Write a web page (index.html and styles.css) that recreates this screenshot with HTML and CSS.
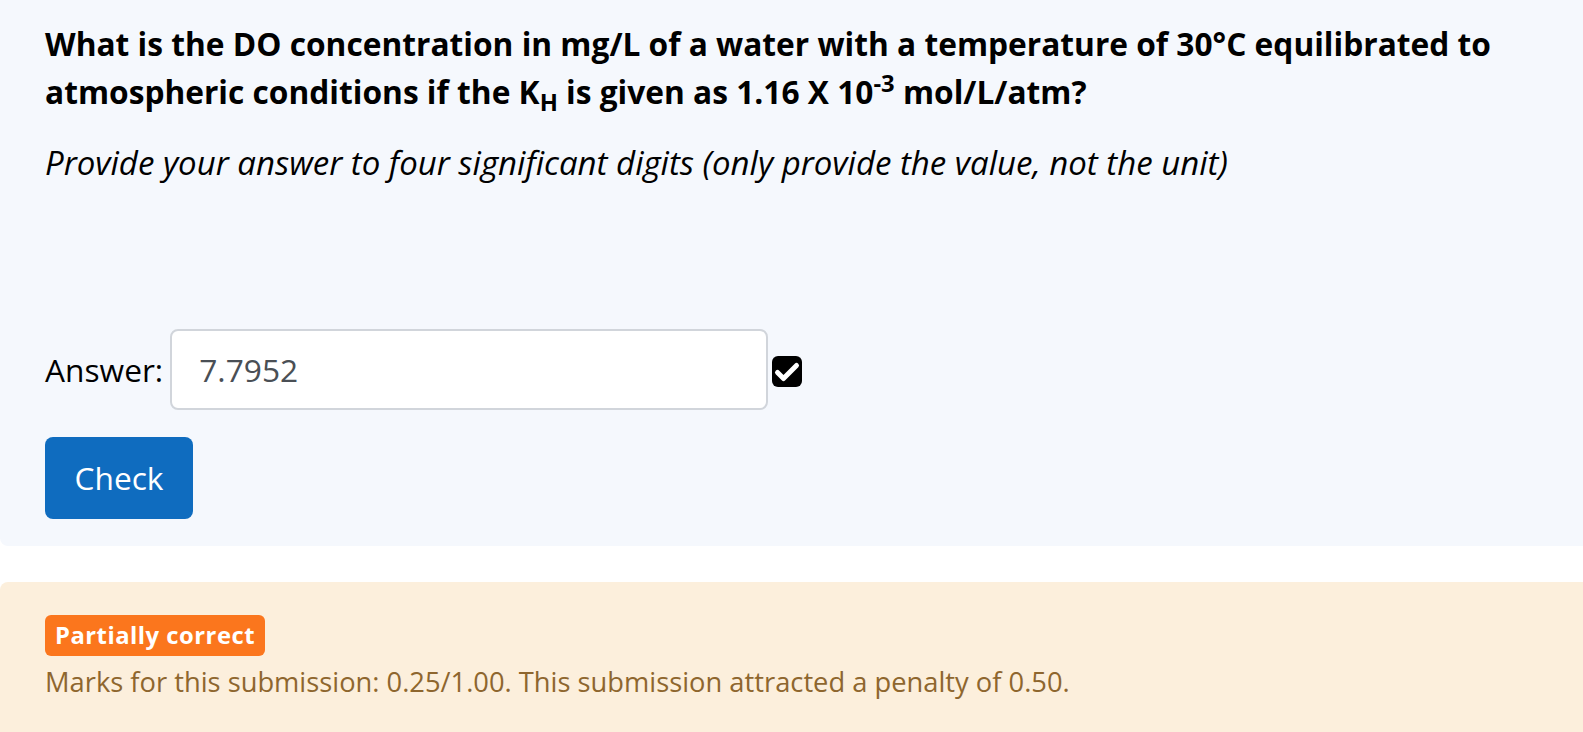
FILE: index.html
```html
<!DOCTYPE html>
<html lang="en">
<head>
<meta charset="utf-8">
<title>Question</title>
<link rel="stylesheet" href="styles.css">
</head>
<body>
<div class="formulation">
  <div class="qtext">
    <p class="question"><strong>What is the DO concentration in mg/L of a water with a temperature of 30°C equilibrated to atmospheric conditions if the K<sub>H</sub> is given as 1.16 X 10<sup>-3</sup> mol/L/atm?</strong></p>
    <p class="hint"><em>Provide your answer to four significant digits (only provide the value, not the unit)</em></p>
  </div>
  <div class="ablock">
    <label class="answer-label" for="ans">Answer:</label>
    <input id="ans" class="answer-input" type="text" value="7.7952" readonly>
    <svg class="check-icon" viewBox="0 0 30 31" width="30" height="31" aria-hidden="true">
      <rect x="0" y="0" width="30" height="31" rx="6" ry="6" fill="#000"/>
      <path d="M5.5 16.5 L11.5 22.5 L24.5 9.5" fill="none" stroke="#fff" stroke-width="5" stroke-linecap="round" stroke-linejoin="round"/>
    </svg>
  </div>
  <button class="btn-check" type="button">Check</button>
</div>
<div class="outcome">
  <span class="badge">Partially correct</span>
  <div class="marks">Marks for this submission: 0.25/1.00. This submission attracted a penalty of 0.50.</div>
</div>
</body>
</html>
```
FILE: styles.css
```css
html, body {
  margin: 0;
  padding: 0;
  background: #ffffff;
}
body {
  font-family: "Open Sans", "Noto Sans", "Liberation Sans", sans-serif;
  color: #000;
  font-size: 31.7px;
  line-height: 48px;
  overflow: hidden;
}
.formulation {
  background: #f5f8fd;
  border-radius: 0 0 0 8px;
  padding: 20px 20px 27px 45px;
}
.qtext p {
  margin: 0;
}
.question {
  margin-bottom: 23px !important;
  max-width: 1480px;
}
.question strong {
  font-weight: 700;
}
.question sub {
  font-size: 75%;
  line-height: 0;
  vertical-align: -0.28em;
}
.question sup {
  font-size: 75%;
  line-height: 0;
  vertical-align: 0.5em;
}
.hint em {
  font-style: italic;
  font-size: 33px;
}
.qtext {
  margin-bottom: 142px;
}
.ablock {
  display: flex;
  align-items: center;
}
.answer-label {
  margin-right: 7px;
}
.answer-input {
  box-sizing: border-box;
  width: 598px;
  height: 81px;
  border: 2px solid #d1d5db;
  border-radius: 8px;
  background: #fff;
  padding: 0 0 0 27px;
  font-family: inherit;
  font-size: 31.7px;
  color: #4a4f55;
  outline: none;
}
.check-icon {
  margin-left: 4px;
  margin-top: 4px;
  display: block;
}
.btn-check {
  display: block;
  margin-top: 27px;
  box-sizing: border-box;
  height: 82px;
  width: 148px;
  padding: 0;
  border: none;
  border-radius: 8px;
  background: #0f6cbf;
  color: #fff;
  font-family: inherit;
  font-size: 31.7px;
  line-height: 48px;
}
.outcome {
  margin-top: 36px;
  background: #fcefdc;
  border-radius: 8px 0 0 8px;
  padding: 33px 20px 40px 45px;
  display: flex;
  flex-direction: column;
  align-items: flex-start;
}
.badge {
  display: inline-block;
  background: #fb761d;
  color: #fff;
  font-weight: 700;
  font-size: 23.8px;
  letter-spacing: 0.5px;
  line-height: 25px;
  padding: 8px 10px;
  border-radius: 6px;
}
.marks {
  margin-top: 5px;
  color: #8e662e;
  font-size: 27.3px;
  line-height: 42px;
}
```
